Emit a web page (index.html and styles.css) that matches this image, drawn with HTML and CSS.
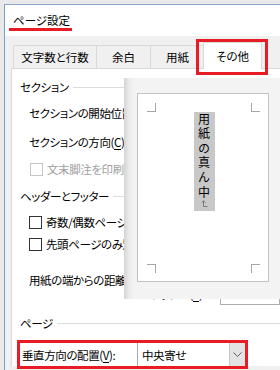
FILE: index.html
```html
<!DOCTYPE html>
<html lang="ja">
<head>
    <meta charset="UTF-8">
    <title>ページ設定</title>
    <link rel="stylesheet" href="styles.css">
</head>
<body>
    <div class="window">
        <div class="titlebar"><span class="title">ページ設定</span></div>
        <div class="tabs">
            <div class="tab tab-wide">文字数と行数</div>
            <div class="tab">余白</div>
            <div class="tab">用紙</div>
            <div class="tab tab-active">その他</div>
        </div>
        <div class="panel">
            <div class="group-head"><span>セクション</span><i class="rule"></i></div>
            <div class="row row-start">セクションの開始位置(<u>R</u>):</div>
            <div class="row row-dir">セクションの方向(<u>C</u>)</div>
            <div class="row check disabled"><span class="box"></span>文末脚注を印刷しない(<u>U</u>)</div>
            <div class="group-head group-hf"><span>ヘッダーとフッター</span><i class="rule"></i></div>
            <div class="row check"><span class="box"></span>奇数/偶数ページ別指定(<u>O</u>)</div>
            <div class="row check"><span class="box"></span>先頭ページのみ別指定(<u>P</u>)</div>
            <div class="distance">
                <div class="distance-label">用紙の端からの距離:</div>
                <div class="fields">
                    <div class="field"><span class="field-label">ヘッダー(<u>H</u>):</span><span class="input"></span></div>
                    <div class="field"><span class="field-label">フッター(<u>F</u>):</span><span class="input"></span></div>
                </div>
            </div>
            <div class="group-head group-page"><span>ページ</span><i class="rule"></i></div>
            <div class="align-row">
                <span class="align-label">垂直方向の配置(<u>V</u>):</span>
                <div class="combo">
                    <span class="combo-text">中央寄せ</span>
                    <span class="combo-btn">
                        <svg width="9" height="5" viewBox="0 0 9 5"><path d="M0.5 0.5 L4.5 4.5 L8.5 0.5" fill="none" stroke="#606060" stroke-width="1"/></svg>
                    </span>
                </div>
            </div>
        </div>

        <!-- preview lies over the right half of the tab -->
        <div class="preview">
            <div class="page">
                <div class="marks">
                    <i class="mark mark-tl"></i>
                    <i class="mark mark-tr"></i>
                </div>
                <div class="page-body">
                    <div class="highlight">
                        <span class="vtext">用紙の真ん中</span>
                        <svg class="para" width="7" height="7" viewBox="0 0 7 7"><path d="M6.5 6.5 H2.5 V0.8 M0.7 2.6 L2.5 0.8 L4.3 2.6" fill="none" stroke="#7a7a7a" stroke-width="1"/></svg>
                    </div>
                </div>
                <div class="marks">
                    <i class="mark mark-bl"></i>
                    <i class="mark mark-br"></i>
                </div>
            </div>
        </div>
    </div>
</body>
</html>
```

FILE: styles.css
```css
body {
    margin: 0;
    background-color: #e9e9e9;
    font-family: "Noto Sans CJK JP", "Noto Sans", sans-serif;
    font-size: 11.5px;
    font-feature-settings: "palt";
    color: #000;
    overflow: hidden;
    height: 370px;
}

u {
    text-underline-offset: 2px;
}

.window {
    position: relative;
    margin: 4px 0 0 4px;
    width: 275px;
    height: 366px;
    border-top: 1px solid #8aa6cc;
    border-left: 1px solid #7a9dcc;
    background-color: #f0f0f0;
    overflow: hidden;
}

.titlebar {
    height: 31px;
    background-color: white;
    padding-left: 4px;
    box-sizing: border-box;
}

.title {
    display: inline-block;
    margin-top: 8px;
    width: 63px;
    padding-left: 4px;
    box-sizing: border-box;
    line-height: 15px;
    border-bottom: 3px solid #e81c24;
}

.tabs {
    display: flex;
    align-items: flex-end;
    height: 32px;
    padding-left: 8px;
}

.tab {
    width: 55px;
    height: 23px;
    line-height: 22px;
    text-align: center;
    box-sizing: border-box;
    border: 1px solid #d9d9d9;
    border-bottom: none;
    margin-left: -1px;
    white-space: nowrap;
}

.tab-wide {
    width: 84px;
    margin-left: 0;
}

.tab-active {
    position: relative;
    width: 59px;
    height: 27px;
    margin-left: -2px;
    margin-bottom: -1px;
    padding-top: 2px;
    background-color: white;
}

.tab-active::after {
    content: "";
    position: absolute;
    left: -8px;
    top: -4px;
    right: -7px;
    bottom: -6px;
    border: 3px solid #e81c24;
}

.panel {
    margin-left: 6px;
    height: 298px;
    background-color: white;
    border-top: 1px solid #d9d9d9;
    border-left: 1px solid #d9d9d9;
    padding: 6px 0 0 8px;
    box-sizing: border-box;
    white-space: nowrap;
    letter-spacing: -0.4px;
}

.group-head {
    display: flex;
    align-items: center;
    height: 24px;
}

.rule {
    flex: 1;
    height: 1px;
    margin-left: 4px;
    background-color: #dcdcdc;
}

.group-hf {
    height: 30px;
}

.group-page {
    height: 20px;
    margin-top: 8px;
}

.row {
    display: flex;
    align-items: center;
    padding-left: 9px;
    height: 22px;
}

.row-start {
    height: 28px;
}

.row-dir {
    height: 30px;
}

.check .box {
    width: 13px;
    height: 13px;
    box-sizing: border-box;
    border: 1px solid #333;
    margin-right: 4px;
    flex-shrink: 0;
}

.disabled {
    height: 24px;
    padding-left: 10px;
    color: #a0a0a0;
}

.disabled .box {
    border-color: #c6c6c6;
}

.distance {
    display: flex;
    margin-top: 2px;
    padding-left: 9px;
}

.distance-label {
    width: 134px;
    padding-top: 13px;
    line-height: 20px;
}

.fields {
    display: flex;
    flex-direction: column;
    gap: 4px;
}

.field {
    display: flex;
    align-items: center;
    height: 22px;
}

.field-label {
    width: 69px;
}

.input {
    width: 60px;
    height: 22px;
    box-sizing: border-box;
    border: 1px solid #adadad;
}

.align-row {
    display: flex;
    align-items: center;
    margin: 7px 0 0 -3px;
    width: 231px;
    height: 29px;
    box-sizing: border-box;
    border: 3px solid #e81c24;
}

.align-label {
    width: 117px;
    padding-left: 2px;
    box-sizing: border-box;
}

.combo {
    flex: 1;
    display: flex;
    align-items: center;
    height: 23px;
    border-left: 1px solid #a9a9a9;
}

.combo-text {
    flex: 1;
    padding-left: 4px;
}

.combo-btn {
    width: 16px;
    height: 23px;
    display: flex;
    align-items: center;
    justify-content: center;
    background-color: #e3e3e3;
    border-left: 1px solid #c8c8c8;
    box-sizing: border-box;
}

.preview {
    position: absolute;
    left: 119px;
    top: 73px;
    width: 161px;
    height: 221px;
    padding: 15px 0 0 13px;
    box-sizing: border-box;
    background: linear-gradient(to right, #d4d4d4 0, #ebebeb 5px, #f3f3f3 10px);
}

.page {
    width: 132px;
    height: 189px;
    box-sizing: border-box;
    border: 1px solid #c3c3c3;
    background-color: white;
    padding: 9px 8px 8px 9px;
    display: flex;
    flex-direction: column;
}

.marks {
    display: flex;
    justify-content: space-between;
    height: 9px;
}

.mark {
    width: 9px;
    height: 9px;
    box-sizing: border-box;
    border: 0 solid #a6a6a6;
}

.mark-tl { border-right-width: 1px; border-bottom-width: 1px; }
.mark-tr { border-left-width: 1px; border-bottom-width: 1px; }
.mark-bl { border-right-width: 1px; border-top-width: 1px; }
.mark-br { border-left-width: 1px; border-top-width: 1px; }

.page-body {
    flex: 1;
    display: flex;
    justify-content: center;
}

.highlight {
    width: 21px;
    height: 99px;
    margin-left: 1px;
    background-color: #c8c8c8;
    display: flex;
    flex-direction: column;
    align-items: center;
    padding-top: 1px;
    box-sizing: border-box;
}

.vtext {
    writing-mode: vertical-rl;
    font-feature-settings: normal;
    font-size: 12px;
    letter-spacing: 2.6px;
    line-height: 21px;
}

.para {
    margin-top: -1px;
}
```
